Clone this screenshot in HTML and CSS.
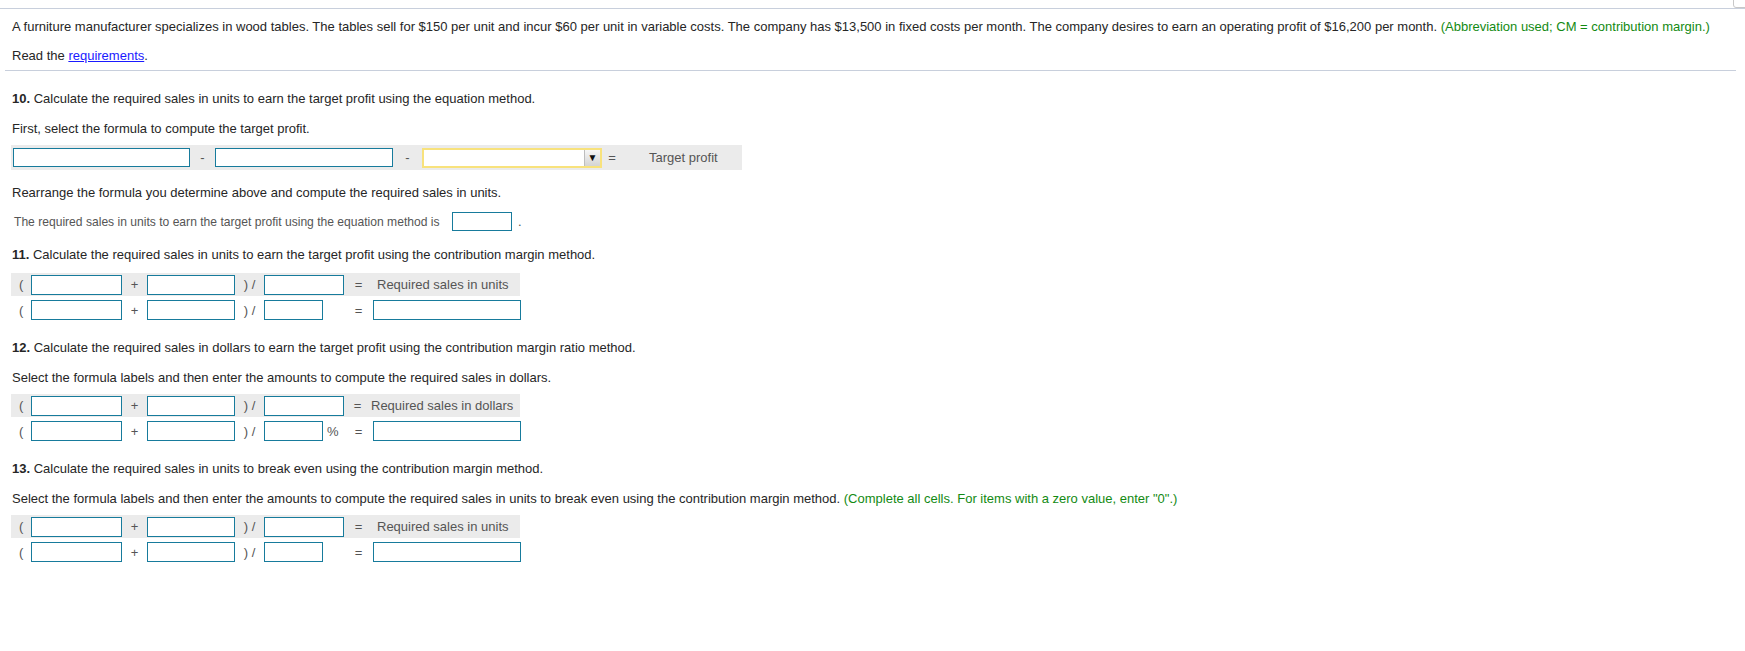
FILE: index.html
```html
<!DOCTYPE html>
<html lang="en">
<head>
    <meta charset="UTF-8">
    <meta name="viewport" content="width=device-width, initial-scale=1.0">
    <link rel="stylesheet" href="styles.css">
</head>
<body>
    <div class="topbar"><span class="corner-btn"></span></div>
    <div class="intro">
        <p class="line">A furniture manufacturer specializes in wood tables. The tables sell for $150 per unit and incur $60 per unit in variable costs. The company has $13,500 in fixed costs per month. The company desires to earn an operating profit of $16,200 per month. <span class="hint">(Abbreviation used; CM = contribution margin.)</span></p>
        <p class="line read">Read the <a href="#">requirements</a>.</p>
    </div>

    <div class="content">
        <p class="line q"><b>10.</b> Calculate the required sales in units to earn the target profit using the equation method.</p>
        <p class="line sub">First, select the formula to compute the target profit.</p>
        <div class="band band-10">
            <span class="box w177"></span>
            <span class="op op-25">-</span>
            <span class="box w178"></span>
            <span class="op op-29">-</span>
            <span class="select"><span class="arrow">&#9660;</span></span>
            <span class="op op-eq10">=</span>
            <span class="label">Target profit</span>
        </div>
        <p class="line sub2">Rearrange the formula you determine above and compute the required sales in units.</p>
        <div class="answer">
            <span class="answer-text">The required sales in units to earn the target profit using the equation method is</span>
            <span class="box w60"></span>
            <span class="dot">.</span>
        </div>

        <p class="line q q11"><b>11.</b> Calculate the required sales in units to earn the target profit using the contribution margin method.</p>
        <div class="formula">
            <div class="row band">
                <span class="cell paren">(</span><span class="box w91"></span>
                <span class="cell plus">+</span><span class="box w88"></span>
                <span class="cell div">) /</span><span class="box w80"></span>
                <span class="cell eq">=</span><span class="label lab">Required sales in units</span>
            </div>
            <div class="row">
                <span class="cell paren">(</span><span class="box w91"></span>
                <span class="cell plus">+</span><span class="box w88"></span>
                <span class="cell div">) /</span><span class="box w59"></span><span class="cell pct"></span>
                <span class="cell eq">=</span><span class="box w148"></span>
            </div>
        </div>

        <p class="line q"><b>12.</b> Calculate the required sales in dollars to earn the target profit using the contribution margin ratio method.</p>
        <p class="line sub">Select the formula labels and then enter the amounts to compute the required sales in dollars.</p>
        <div class="formula">
            <div class="row band">
                <span class="cell paren">(</span><span class="box w91"></span>
                <span class="cell plus">+</span><span class="box w88"></span>
                <span class="cell div">) /</span><span class="box w80"></span>
                <span class="cell eq eq-tight">=</span><span class="label">Required sales in dollars</span>
            </div>
            <div class="row">
                <span class="cell paren">(</span><span class="box w91"></span>
                <span class="cell plus">+</span><span class="box w88"></span>
                <span class="cell div">) /</span><span class="box w59"></span><span class="cell pct">%</span>
                <span class="cell eq">=</span><span class="box w148"></span>
            </div>
        </div>

        <p class="line q"><b>13.</b> Calculate the required sales in units to break even using the contribution margin method.</p>
        <p class="line sub">Select the formula labels and then enter the amounts to compute the required sales in units to break even using the contribution margin method. <span class="hint">(Complete all cells. For items with a zero value, enter "0".)</span></p>
        <div class="formula">
            <div class="row band">
                <span class="cell paren">(</span><span class="box w91"></span>
                <span class="cell plus">+</span><span class="box w88"></span>
                <span class="cell div">) /</span><span class="box w80"></span>
                <span class="cell eq">=</span><span class="label lab">Required sales in units</span>
            </div>
            <div class="row">
                <span class="cell paren">(</span><span class="box w91"></span>
                <span class="cell plus">+</span><span class="box w88"></span>
                <span class="cell div">) /</span><span class="box w59"></span><span class="cell pct"></span>
                <span class="cell eq">=</span><span class="box w148"></span>
            </div>
        </div>
    </div>
</body>
</html>
```

FILE: styles.css
```css
body {
   margin: 0;
   font-family: "Liberation Sans", Arial, sans-serif;
   font-size: 13px;
   color: #262626;
   background: #fff;
}
.topbar {
   height: 8px;
   border-bottom: 1px solid #c8cfdc;
   position: relative;
}
.corner-btn {
   position: absolute; /* sits over the top edge, cut off by the window */
   right: -6px;
   top: -4px;
   width: 16px;
   height: 10px;
   border: 1px solid #c8c8c8;
   border-radius: 3px;
   background: #fff;
}
.line {
   margin: 0;
   line-height: 16px;
   white-space: nowrap;
}
.intro {
   margin: 0 9px 0 5px;
   padding: 10px 0 6px 7px;
   border-bottom: 1px solid #c8cfdc;
}
.read {
   margin-top: 13px;
}
a {
   color: #1a1aff;
}
.hint {
   color: #138a13;
}
.content {
   padding-left: 11px;
}
.content .line {
   padding-left: 1px;
}
b {
   font-weight: bold;
}
.q {
   margin-top: 20px;
}
.q11 {
   margin-top: 16px;
}
.sub {
   margin-top: 14px;
}
.sub2 {
   margin-top: 15px;
}
.band {
   background: #ebebeb;
}
.band-10 {
   margin-top: 8px;
   width: 731px;
   height: 25px;
   display: flex;
   align-items: center;
   padding-left: 2px;
   box-sizing: border-box;
}
.box {
   display: inline-block;
   box-sizing: border-box;
   height: 19px;
   border: 1px solid #177b9c;
   background: #fff;
   flex: none;
}
.w177 { width: 177px; }
.w178 { width: 178px; }
.w60 { width: 60px; }
.w91 { width: 91px; }
.w88 { width: 88px; }
.w80 { width: 80px; }
.w59 { width: 59px; }
.w148 { width: 148px; }
.op {
   color: #555;
   text-align: center;
   flex: none;
}
.op-25 { width: 25px; }
.op-29 { width: 29px; }
.op-eq10 { width: 20px; }
.select {
   width: 180px;
   height: 20px;
   box-sizing: border-box;
   border: 2px solid #f8e27c;
   background: #fff;
   display: flex;
   justify-content: flex-end;
   flex: none;
}
.arrow {
   width: 15px;
   height: 16px;
   background: linear-gradient(#f6f6f6, #d4d4d4);
   border-left: 1px solid #bdbdbd;
   font-size: 10px;
   line-height: 16px;
   text-align: center;
   color: #111;
}
.label {
   color: #555;
}
.band-10 .label {
   padding-left: 27px;
}
.answer {
   margin-top: 11px;
   display: flex;
   align-items: center;
   height: 19px;
   color: #555;
   white-space: nowrap;
}
.answer-text {
   padding-left: 3px;
   width: 438px;
   flex: none;
   font-size: 12.1px;
}
.dot {
   padding-left: 6px;
}
.formula {
   margin-top: 10px;
   margin-bottom: -1px;
}
.sub + .formula {
   margin-top: 8px;
}
.formula .box {
   height: 20px;
}
.row {
   display: flex;
   align-items: center;
   height: 22px;
   color: #555;
}
.row.band {
   width: 509px;
   height: 23px;
   margin-bottom: 3px;
}
.cell {
   flex: none;
   text-align: center;
}
.paren {
   width: 20px;
   text-align: left;
   padding-left: 8px;
   box-sizing: border-box;
}
.plus { width: 25px; }
.div { width: 29px; }
.pct { width: 21px; text-align: left; padding-left: 4px; box-sizing: border-box; }
.eq { width: 29px; }
.eq-tight { width: 27px; }
.lab {
   padding-left: 4px;
}
```
